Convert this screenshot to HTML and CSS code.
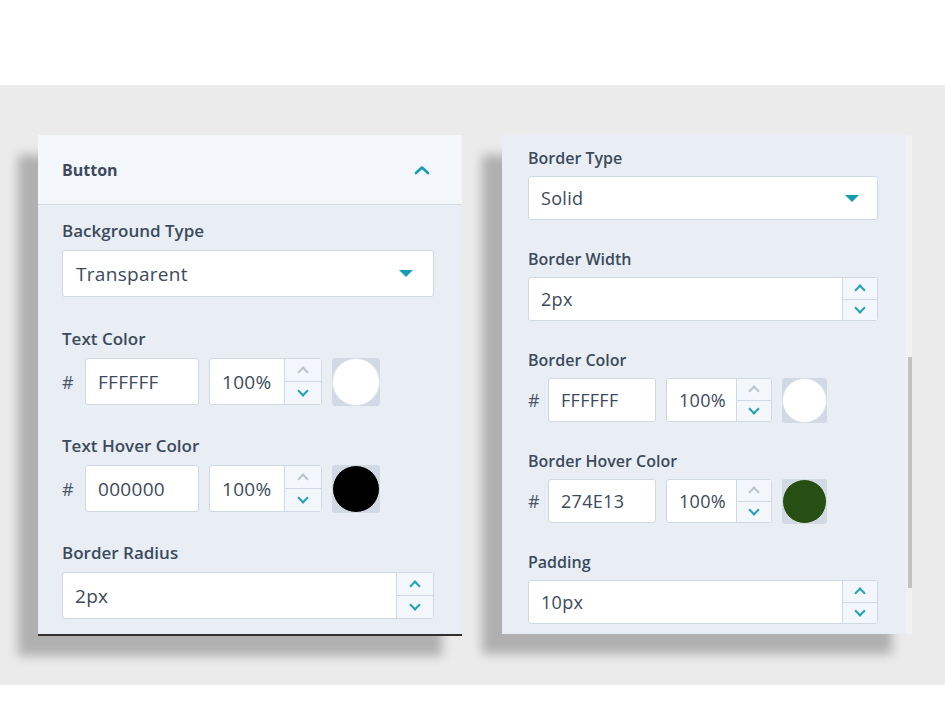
FILE: index.html
```html
<!DOCTYPE html>
<html>
  <head>
    <title>Button settings</title>
    <link rel="stylesheet" href="styles.css">
  </head>
  <body>
    <div class="stage">
      <div class="panel panel-left">
        <div class="panel-header">
          <span class="panel-title">Button</span>
          <svg class="chevron" width="16" height="10" viewBox="0 0 16 10">
            <path d="M2 8 L8 2.5 L14 8" fill="none" stroke="#179db1" stroke-width="2.6" stroke-linecap="round" stroke-linejoin="round"/>
          </svg>
        </div>
        <div class="panel-body">
          <div class="field">
            <div class="label">Background Type</div>
            <div class="select">
              <span class="value">Transparent</span>
              <span class="caret"></span>
            </div>
          </div>
          <div class="field">
            <div class="label">Text Color</div>
            <div class="color-row">
              <span class="hash">#</span>
              <input class="box hex" value="FFFFFF" readonly>
              <div class="box opacity">
                <input class="num-input" value="100%" readonly>
                <div class="spinner">
                  <button class="spin up disabled"></button>
                  <button class="spin down"></button>
                </div>
              </div>
              <div class="swatch"><div class="dot" style="background: #ffffff"></div></div>
            </div>
          </div>
          <div class="field">
            <div class="label">Text Hover Color</div>
            <div class="color-row">
              <span class="hash">#</span>
              <input class="box hex" value="000000" readonly>
              <div class="box opacity">
                <input class="num-input" value="100%" readonly>
                <div class="spinner">
                  <button class="spin up disabled"></button>
                  <button class="spin down"></button>
                </div>
              </div>
              <div class="swatch"><div class="dot" style="background: #000000"></div></div>
            </div>
          </div>
          <div class="field">
            <div class="label">Border Radius</div>
            <div class="box number">
              <input class="num-input" value="2px" readonly>
              <div class="spinner">
                <button class="spin up"></button>
                <button class="spin down"></button>
              </div>
            </div>
          </div>
        </div>
      </div>

      <div class="panel panel-right">
        <div class="panel-body">
          <div class="field">
            <div class="label">Border Type</div>
            <div class="select">
              <span class="value">Solid</span>
              <span class="caret"></span>
            </div>
          </div>
          <div class="field">
            <div class="label">Border Width</div>
            <div class="box number">
              <input class="num-input" value="2px" readonly>
              <div class="spinner">
                <button class="spin up"></button>
                <button class="spin down"></button>
              </div>
            </div>
          </div>
          <div class="field">
            <div class="label">Border Color</div>
            <div class="color-row">
              <span class="hash">#</span>
              <input class="box hex" value="FFFFFF" readonly>
              <div class="box opacity">
                <input class="num-input" value="100%" readonly>
                <div class="spinner">
                  <button class="spin up disabled"></button>
                  <button class="spin down"></button>
                </div>
              </div>
              <div class="swatch"><div class="dot" style="background: #ffffff"></div></div>
            </div>
          </div>
          <div class="field">
            <div class="label">Border Hover Color</div>
            <div class="color-row">
              <span class="hash">#</span>
              <input class="box hex" value="274E13" readonly>
              <div class="box opacity">
                <input class="num-input" value="100%" readonly>
                <div class="spinner">
                  <button class="spin up disabled"></button>
                  <button class="spin down"></button>
                </div>
              </div>
              <div class="swatch"><div class="dot" style="background: #274e13"></div></div>
            </div>
          </div>
          <div class="field">
            <div class="label">Padding</div>
            <div class="box number">
              <input class="num-input" value="10px" readonly>
              <div class="spinner">
                <button class="spin up"></button>
                <button class="spin down"></button>
              </div>
            </div>
          </div>
        </div>
        <div class="scroll-track"><div class="scroll-thumb"></div></div>
      </div>
    </div>
  </body>
</html>
```

FILE: styles.css
```css
body {
  margin: 0;
  background: #ffffff;
  font-family: "Open Sans", "Liberation Sans", sans-serif;
  color: #3c4a5c;
}
.stage {
  margin-top: 85px;
  height: 600px;
  box-sizing: border-box;
  background: #ebebeb;
  display: flex;
  align-items: flex-start;
  gap: 40px;
  padding: 50px 0 0 38px;
}
.panel {
  background: #e9eef5;
  box-shadow: -20px 20px 10px rgba(0, 0, 0, 0.25);
}
.panel-left {
  width: 424px;
  height: 499px;
  border-bottom: 2px solid #35302d;
}
.panel-header {
  height: 70px;
  box-sizing: border-box;
  background: #f3f6fa;
  border-bottom: 1px solid #d3dbe5;
  display: flex;
  align-items: center;
  justify-content: space-between;
  padding: 0 32px 0 24px;
}
.panel-title {
  font-size: 16px;
  font-weight: 700;
}
.chevron {
  display: block;
}
.panel-body {
  padding: 16px 28px 0 24px;
}
.label {
  font-size: 17px;
  font-weight: 600;
  line-height: 20px;
  margin-bottom: 9px;
}
.field {
  margin-bottom: 31px;
}
.panel-left .field:first-child {
  margin-bottom: 32px;
}
.select,
.box {
  box-sizing: border-box;
  height: 47px;
  background: #ffffff;
  border: 1px solid #d0d9e3;
  border-radius: 3px;
}
.select {
  display: flex;
  align-items: center;
  justify-content: space-between;
  padding: 0 20px 0 13px;
}
.value,
.box,
.num-input {
  font-family: "Open Sans", "Liberation Sans", sans-serif;
  font-size: 19px;
  letter-spacing: 0.3px;
  color: #3c4a5c;
}
.caret {
  width: 0;
  height: 0;
  border-left: 7px solid transparent;
  border-right: 7px solid transparent;
  border-top: 7px solid #169db2;
}
.color-row {
  display: flex;
  align-items: center;
  gap: 10px;
  height: 47px;
}
.hash {
  width: 13px;
  font-size: 18px;
  color: #4a5668;
}
input.box,
.num-input {
  outline: none;
  margin: 0;
}
.hex {
  width: 114px;
  padding: 0 0 0 12px;
}
.opacity {
  width: 113px;
  display: flex;
}
.number {
  display: flex;
}
.num-input {
  flex: 1;
  min-width: 0;
  border: none;
  background: transparent;
  padding: 0 0 0 12px;
}
.spinner {
  width: 36px;
  border-left: 1px solid #d0d9e3;
  display: flex;
  flex-direction: column;
  background: #f3f6fa;
}
.spin {
  flex: 1;
  border: none;
  padding: 0;
  background: transparent;
  display: flex;
  align-items: center;
  justify-content: center;
}
.spin + .spin {
  border-top: 1px solid #d0d9e3;
}
.spin::after {
  content: "";
  width: 6px;
  height: 6px;
  border-left: 2px solid #22a2b6;
  border-top: 2px solid #22a2b6;
  transform: rotate(45deg);
  margin-top: 4px;
}
.spin.down::after {
  transform: rotate(225deg);
  margin-top: -4px;
}
.spin.disabled::after {
  border-color: #b9c5d0;
}
.swatch {
  flex: none;
  width: 48px;
  height: 48px;
  border-radius: 3px;
  background: #d0d9e4;
}
.dot {
  box-sizing: border-box;
  width: 100%;
  height: 100%;
  border-radius: 50%;
  border: 1px solid #dbe2ea;
}

/* right panel is captured a little smaller */
.panel-right {
  width: 410px;
  height: 499px;
  display: flex;
}
.panel-right .panel-body {
  flex: 1;
  padding: 13px 28px 0 26px;
}
.panel-right .label {
  font-size: 16px;
  margin-bottom: 8px;
}
.panel-right .field {
  margin-bottom: 29px;
}
.panel-right .value,
.panel-right .box,
.panel-right .num-input {
  font-size: 18px;
}
.panel-right .select,
.panel-right .box,
.panel-right .color-row {
  height: 44px;
}
.panel-right .select {
  padding: 0 18px 0 12px;
}
.panel-right .hash {
  width: 11px;
  margin-right: -1px;
}
.panel-right .hex {
  width: 108px;
  padding-left: 12px;
}
.panel-right .opacity {
  width: 106px;
}
.panel-right .spinner {
  width: 34px;
}
.panel-right .swatch {
  width: 45px;
  height: 45px;
}
.scroll-track {
  width: 6px;
  background: #f1f1f1;
  display: flex;
  justify-content: flex-end;
}
.scroll-thumb {
  width: 4px;
  height: 231px;
  margin-top: 222px;
  background: #c1c1c1;
}
```
